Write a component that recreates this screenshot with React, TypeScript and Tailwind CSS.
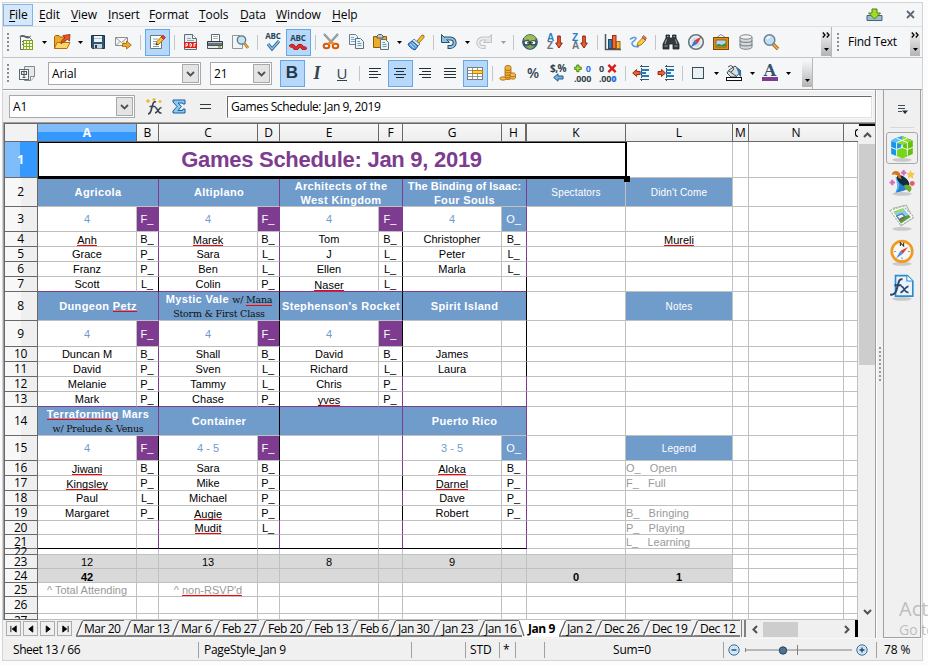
import React from "react";

type Kids = { children?: React.ReactNode };

/* ---------- icon helpers ---------- */
function Svg({ children, s = 18 }: Kids & { s?: number }) {
  return (
    <svg width={s} height={s} viewBox="0 0 18 18" fill="none" className="shrink-0">
      {children}
    </svg>
  );
}

const NewDoc = () => (
  <Svg>
    <path d="M3.500 3.500h8l3 3v10h-11z" fill="#f4f6f7" stroke="#5f6b70" />
    <path d="M2 4c2-3 5-2 7-1s4 1 5-1c0 3-3 4-5 3S4 3 2 4z" fill="#59646a" />
    <path d="M5 8.500h2M5 11.500h1" stroke="#59646a" />
    <rect x="6.500" y="7.500" width="9" height="9" fill="#f5fbe8" stroke="#7d9b1e" />
    <path d="M6.500 10.500h9M6.500 13.500h9M9.500 7.500v9M12.500 7.500v9" stroke="#86b31c" />
  </Svg>
);
const Open = () => (
  <Svg>
    <path d="M1.500 15.500v-12l1-1H6l1 1.500h5V15z" fill="#f0a92c" stroke="#a86408" />
    <path d="M1.500 15.500l2.500-6h13l-3 6z" fill="#ffd768" stroke="#b3720c" />
    <path d="M8 11c0-4 2-5 4-6l-2-2.500 7-1-.5 6.500-2-1.500c-2 1-4 2-6.500 4.500z" fill="#e55b25" stroke="#8d2c10" strokeWidth=".8" />
  </Svg>
);
const Save = () => (
  <Svg>
    <path d="M2.500 2.500h13v13h-12l-1-1z" fill="#315675" stroke="#203246" />
    <path d="M5 3h8v6H5z" fill="#f0f4f7" />
    <path d="M5 11h8v4.500H5z" fill="#ccd5dc" />
    <path d="M6 12h2v3H6z" fill="#253c52" />
    <path d="M5 5.500h8" stroke="#a8c8e0" />
  </Svg>
);
const Mail = () => (
  <Svg>
    <path d="M1.500 4.500h12v8h-12z" fill="#f8f8f5" stroke="#8a8f90" />
    <path d="M2 5l5.500 4.500L13 5M2 12.500l4-4M13 12.500l-4-4" stroke="#949a9a" />
    <path d="M8.500 10.500h4V8l4.800 4-4.800 4v-2.500h-4z" fill="#f5aa24" stroke="#a25f0b" strokeWidth=".8" />
  </Svg>
);
const EditDoc = () => (
  <Svg>
    <path d="M2.500 2.500h11v13h-11z" fill="#fff" stroke="#68787f" />
    <path d="M5 6h5M5 8.500h4M5 11h6M5 13.500h6" stroke="#7ba0b8" />
    <path d="M8 12l1-3.500L14 3l2.500 2.500L11 11z" fill="#f8c62c" stroke="#93600c" strokeWidth=".8" />
    <path d="M13 4l2-2 2.500 2.500-2 2z" fill="#e33c34" stroke="#8c2323" strokeWidth=".6" />
    <path d="M8 12l.5-2 1.500 1.500z" fill="#222" />
  </Svg>
);
const Pdf = () => (
  <Svg>
    <path d="M3.500 1.500h8l4 4v11h-12z" fill="#e7edf0" stroke="#596e78" />
    <path d="M11.500 1.500v4h4" stroke="#596e78" fill="#fff" />
    <path d="M6 5.500h4M6 7.500h7" stroke="#91a8b3" />
    <rect x="3" y="9" width="13" height="6" fill="#d9201b" />
    <path d="M5 14v-3.500h1.500v2H5M9 10.500v3h1l.8-1.500-.8-1.500zM13 14v-3.500h2M13 12.200h1.500" stroke="#fff" strokeWidth=".9" />
  </Svg>
);
const Print = () => (
  <Svg>
    <path d="M5.500 8V1.500h8V8" fill="#fff" stroke="#5e6a70" />
    <path d="M7 3.500h5M7 5.500h5" stroke="#a3adb1" />
    <path d="M1.500 8.500h15v5h-15z" fill="#68747b" stroke="#303a40" />
    <path d="M2 9.500h14" stroke="#b8c0c3" />
    <path d="M1.500 12.500h15v3h-15z" fill="#e8ebec" stroke="#495359" />
    <path d="M12 14h3" stroke="#75ac2b" strokeWidth="1.500" />
  </Svg>
);
const Preview = () => (
  <Svg>
    <path d="M1.500 2.500h7l3 3v10h-10z" fill="#f1f4f5" stroke="#8b989e" />
    <circle cx="10.500" cy="7" r="4.200" fill="#c5e1f2" stroke="#5d7482" strokeWidth="1.300" />
    <path d="M13.500 10.500l3.500 4.500" stroke="#a8711a" strokeWidth="2.800" />
    <path d="M13.500 10.500l3.500 4.500" stroke="#f1bd4b" strokeWidth="1.200" />
  </Svg>
);
const Abc = ({ auto = false }: { auto?: boolean }) => (
  <div className={`flex h-[22px] w-[20px] flex-col items-center ${auto ? "pt-[2px]" : ""}`}>
    <span className="h-[9px] font-['Open_Sans',sans-serif] text-[8px] font-bold leading-[9px] tracking-[-0.1px] text-[#26445a]">ABC</span>
    {auto ? (
      <svg width="18" height="7" viewBox="0 0 18 7" fill="none" className="mt-px">
        <path d="M1 4q2-3 4 0t4 0 4 0 4 0" stroke="#981b1b" strokeWidth="3.600" />
        <path d="M1 4q2-3 4 0t4 0 4 0 4 0" stroke="#f02a25" strokeWidth="2" />
      </svg>
    ) : (
      <svg width="16" height="11" viewBox="0 0 16 11" fill="none">
        <path d="M3 4l4 5 7-8" stroke="#235e91" strokeWidth="3" />
        <path d="M3 4l4 5 7-8" stroke="#81c5ef" strokeWidth="1.400" />
      </svg>
    )}
  </div>
);
const Cut = () => (
  <Svg>
    <path d="M2 1l10 11M16 1L6 12" stroke="#727b80" strokeWidth="2" />
    <path d="M2 1l10 11M16 1L6 12" stroke="#d2d7d9" strokeWidth=".7" />
    <ellipse cx="4.500" cy="13" rx="2.800" ry="2.200" stroke="#d4590b" strokeWidth="2" />
    <ellipse cx="13.500" cy="13" rx="2.800" ry="2.200" stroke="#d4590b" strokeWidth="2" />
    <path d="M6 11l3-2 3 2" stroke="#f38a1c" strokeWidth="2.200" />
  </Svg>
);
const Copy = () => (
  <Svg>
    <path d="M2.500 1.500h6l2 2v8h-8z" fill="#edf4f8" stroke="#71818a" />
    <path d="M4 4.500h3M4 6.500h4M4 8.500h4" stroke="#83a9c0" />
    <path d="M8.500 5.500h5l3 3v7h-8z" fill="#edf4f8" stroke="#5f717b" />
    <path d="M10.500 8.500H13M10.500 10.500h4M10.500 12.500h4" stroke="#6f9bb6" />
  </Svg>
);
const Paste = () => (
  <Svg>
    <path d="M1.500 3.500h13v11h-13z" fill="#ecac2a" stroke="#8c5c09" />
    <path d="M5 3l1.500-1.500h3L11 3v2H5z" fill="#c6cdd0" stroke="#50595d" />
    <path d="M8.500 6.500h5l3 3v7h-8z" fill="#edf4f8" stroke="#5f717b" />
    <path d="M10.500 9.500H13M10.500 11.500h4M10.500 13.500h4" stroke="#6f9bb6" />
  </Svg>
);
const Brush = () => (
  <Svg>
    <path d="M10 8l5-6 2 .5v2L12 10z" fill="#f3bb2e" stroke="#8b5e0f" strokeWidth=".8" />
    <path d="M7 6l6 5-2 2-6-5z" fill="#dce5eb" stroke="#587184" strokeWidth=".8" />
    <path d="M5 8l6 5-3 4C5 16 2 14 1 11z" fill="#5b9fe0" stroke="#235590" />
    <path d="M3 11l4 4M5 9.500l4 4" stroke="#b9ddff" />
  </Svg>
);
const Undo = ({ off = false }: { off?: boolean }) => (
  <Svg>
    <g transform={off ? "matrix(-1 0 0 1 18 0)" : undefined}>
      <path d="M4 5.500h6.500a4.200 4.200 0 010 8.400H7.500" stroke={off ? "#bfc3c5" : "#29516f"} strokeWidth="4" />
      <path d="M1.500 1.500v8h8z" fill={off ? "#e3e5e6" : "#8fc0df"} stroke={off ? "#bfc3c5" : "#29516f"} />
      <path d="M4.500 5.500h6a4.200 4.200 0 010 8.400H8.500" stroke={off ? "#eceeef" : "#91c3e1"} strokeWidth="2" />
    </g>
  </Svg>
);
const Globe = () => (
  <Svg>
    <circle cx="9" cy="9" r="7.300" fill="#417ca4" stroke="#31495b" />
    <path d="M3 5c3-4 9-4 12 0l-2 3H9L7 6 4 8z" fill="#9cbf48" />
    <path d="M5 14l4-2 4 2-4 2z" fill="#86ad38" />
    <rect x="3" y="7.800" width="5.500" height="4" rx="2" fill="#fff" stroke="#343e44" strokeWidth="1.100" />
    <rect x="9.500" y="7.800" width="5.500" height="4" rx="2" fill="#fff" stroke="#343e44" strokeWidth="1.100" />
    <path d="M6 9.800h6" stroke="#343e44" strokeWidth="1.300" />
  </Svg>
);
const Sort = ({ desc = false }: { desc?: boolean }) => (
  <div className="flex h-[18px] w-[16px] items-center">
    <div className="flex w-[8px] flex-col font-['Liberation_Sans',sans-serif] text-[10px] font-bold leading-[8.5px]">
      <span className="text-[#247fc4]">{desc ? "Z" : "A"}</span>
      <span className="text-[#69757c]">{desc ? "A" : "Z"}</span>
    </div>
    <svg width="8" height="14" viewBox="0 0 8 14">
      <path d="M2.700 1h2.600v7h2L4 13 .7 8h2z" fill="#ee5c33" stroke="#8d230c" />
    </svg>
  </div>
);
const Chart = () => (
  <Svg>
    <path d="M1.500 1v15.500H17" stroke="#4c5960" strokeWidth="1.500" />
    <rect x="4.500" y="6.500" width="3.500" height="9" fill="#3a79a9" stroke="#1f4767" />
    <rect x="8.500" y="2.500" width="3.500" height="13" fill="#f16a3b" stroke="#a12d0a" />
    <rect x="12.500" y="8.500" width="3.500" height="7" fill="#f6b83a" stroke="#9a650e" />
  </Svg>
);
const Draw = () => (
  <Svg>
    <path d="M1 6.500c2-2 6-3 6-1s-5 3-4 5.500 4 3 7 2.500" stroke="#5b9be1" strokeWidth="1.500" />
    <path d="M8 13l1-3.500 5-5 3 2.500L12 12z" fill="#f8cf3b" stroke="#8a6212" strokeWidth=".8" />
    <path d="M13 4.500l1.500-2 3 2.500L16 7z" fill="#e36f6c" stroke="#913b35" strokeWidth=".6" />
  </Svg>
);
const Binoc = () => (
  <Svg>
    <path d="M4 2h3.500v3h3V2H14v3l3 6v5h-6v-5H7v5H1v-5l3-6z" fill="#323a3e" stroke="#1d2427" strokeWidth=".8" />
    <path d="M4.500 6.500L3 11M13.500 6.500L15 11M2.500 13h3M12.500 13h3M5 3.500h1.500M11.500 3.500H13" stroke="#9aa5aa" />
  </Svg>
);
const Compass = () => (
  <Svg>
    <circle cx="9" cy="9" r="7.300" fill="#eef3f5" stroke="#68767e" strokeWidth="1.600" />
    <circle cx="9" cy="9" r="4.800" fill="#d4dfe5" />
    <path d="M14.500 3.500l-4 7-3-3z" fill="#e6322b" />
    <path d="M3.500 14.500l4-7 3 3z" fill="#3374d6" />
  </Svg>
);
const Gallery = () => (
  <Svg>
    <path d="M4 5l5-3.500L14 5" stroke="#8b949a" />
    <rect x="1.500" y="4.500" width="15" height="12" fill="#e08e1a" stroke="#804a06" />
    <rect x="4" y="7" width="10" height="7" fill="#acd8f4" stroke="#81560c" strokeWidth=".8" />
    <path d="M4.500 13.500V12q2-2 5 0l4.500-2v3.500z" fill="#4e8a25" />
  </Svg>
);
const Database = () => (
  <Svg>
    <path d="M3 4v10c0 3 12 3 12 0V4z" fill="#d6dadc" stroke="#7d878c" />
    <path d="M3 7.500c0 2.500 12 2.500 12 0M3 11c0 2.500 12 2.500 12 0" stroke="#7d878c" strokeWidth="1.300" />
    <ellipse cx="9" cy="4" rx="6" ry="2.200" fill="#f3f5f5" stroke="#7d878c" />
  </Svg>
);
const Zoom = () => (
  <Svg>
    <path d="M11 11l5 5" stroke="#a0651a" strokeWidth="3.400" />
    <path d="M11 11l5 5" stroke="#f0b64c" strokeWidth="1.600" />
    <circle cx="7.500" cy="7" r="5.300" fill="#c2def4" stroke="#668399" strokeWidth="1.500" />
    <path d="M5 6c.5-1.500 1.500-2 3-2" stroke="#fff" strokeWidth="1.300" />
  </Svg>
);
const Styles = () => (
  <Svg>
    <path d="M6.500 1.500h10v10l-3.500 4H6.500z" fill="#e7eaeb" stroke="#7f898e" />
    <path d="M12.500 15.500v-4h4" stroke="#7f898e" fill="#fff" />
    <rect x="1.500" y="4.500" width="9" height="10" fill="#f7f8f8" stroke="#5f6a70" />
    <path d="M3.500 6.500h5v3h-5zM6 5.500V13M4.500 12.500h3" stroke="#4f5b62" strokeWidth="1.100" />
  </Svg>
);
const Lines = ({ kind }: { kind: "l" | "c" | "r" | "j" }) => {
  const d = {
    l: "M3 4.500h12M3 7.500h9M3 10.500h12M3 13.500h9",
    c: "M3 4.500h12M5 7.500h8M3 10.500h12M5 13.500h8",
    r: "M3 4.500h12M6 7.500h9M3 10.500h12M6 13.500h9",
    j: "M3 4.500h12M3 7.500h12M3 10.500h12M3 13.500h12",
  }[kind];
  return (
    <Svg>
      <path d={d} stroke="#222e38" />
    </Svg>
  );
};
const Merge = () => (
  <Svg>
    <rect x="1.500" y="3.500" width="15" height="12" fill="#fff" stroke="#717d83" />
    <path d="M1.500 6.500h15M1.500 9.500h15M1.500 12.500h15M6.500 3.500v12M11.500 3.500v12" stroke="#8d979b" />
    <rect x="6.500" y="6.500" width="10" height="3" fill="#ffd03c" stroke="#c27d0b" />
  </Svg>
);
const Coins = () => (
  <Svg>
    <path d="M6 3c0-2 6-2 6 0v11c0 2-6 2-6 0z" fill="#f2b13b" stroke="#a5650b" strokeWidth=".8" />
    <path d="M6 5.500c1 1.200 5 1.200 6 0M6 8c1 1.200 5 1.200 6 0M6 10.500c1 1.200 5 1.200 6 0M6 13c1 1.200 5 1.200 6 0" stroke="#b26e0d" />
    <ellipse cx="4" cy="14.500" rx="3.200" ry="1.700" fill="#f3bb50" stroke="#a5650b" strokeWidth=".8" />
    <path d="M11 10c0-1.500 5.500-1.500 5.500 0v4c0 1.500-5.500 1.500-5.500 0z" fill="#f3bb50" stroke="#a5650b" strokeWidth=".8" />
    <path d="M11 12c1 1 4.500 1 5.500 0" stroke="#b26e0d" />
  </Svg>
);
const Currency = () => (
  <div className="flex h-[18px] w-[18px] flex-col items-center">
    <span className="h-[9px] font-['Open_Sans',sans-serif] text-[10px] font-bold leading-[9px] tracking-[-0.5px] text-[#33414a]">$,%</span>
    <svg width="11" height="9" viewBox="0 0 11 9">
      <path d="M.7 4.500L5 .8v2.200h5v3H5v2.200z" fill="#73b4e2" stroke="#24588b" />
    </svg>
  </div>
);
const Decimal = ({ del = false }: { del?: boolean }) => (
  <div className="flex h-[18px] w-[18px] flex-col justify-between font-['Open_Sans',sans-serif] text-[9px] font-bold leading-[9px] text-[#33414a]">
    <div className={`flex h-[9px] items-center justify-between ${del ? "flex-row-reverse" : ""}`}>
      <svg width="10" height="9" viewBox="0 0 11 9">
        {del ? (
          <path d="M1.500.5l8 8M9.500.5l-8 8" stroke="#d91d17" strokeWidth="2.600" />
        ) : (
          <path d="M3 .7h2.500V3H8v2.500H5.500V8H3V5.500H.7V3H3z" fill="#a6df3c" stroke="#467e0b" />
        )}
      </svg>
      <span className={del ? "" : "pr-px text-[#2b6fe0]"}>0</span>
    </div>
    <span className="h-[8px] tracking-[-0.2px]">
      .0{del ? <>0<b className="text-[#2b6fe0]">0</b></> : "00"}
    </span>
  </div>
);
const Indent = ({ inc = false }: { inc?: boolean }) => (
  <Svg>
    <path d="M8 2.500h9M8 15.500h9" stroke="#3f5666" />
    <path d="M9 6h8M9 9h5M9 12h8" stroke="#1d7dbe" strokeWidth="2" />
    <path d="M9.500 1v16" stroke="#31434e" strokeDasharray="1 2" />
    <path d={inc ? "M8.500 9L4.500 5.500v2H1v3h3.500v2z" : "M.7 9l4-3.500v2h3.500v3H4.700v2z"} fill="#ed5d36" stroke="#8b230c" strokeWidth=".9" />
  </Svg>
);
const Bucket = () => (
  <Svg>
    <path d="M4 6l6-4 6 5-5 6H6L2 9z" fill="#d9dfe2" stroke="#3c4b54" />
    <path d="M3 3q3-3 5 0t-2 5M4 7l7 5" stroke="#3c4b54" />
    <path d="M11 4c4 0 6 3 5 9-3-1-2-5-5-9z" fill="#3177ac" />
    <rect x="1.500" y="13.500" width="15" height="3" fill="#fff" stroke="#111" />
  </Svg>
);
const FontColor = () => (
  <div className="flex h-[18px] w-[16px] flex-col items-center">
    <span className="h-[13px] font-['DejaVu_Serif',serif] text-[16px] font-bold leading-[13px] text-[#35516c]">A</span>
    <i className="h-[4px] w-full bg-[#7d3c8f]" />
  </div>
);

/* ---------- toolbar pieces ---------- */
const Slot = ({ children, on = false }: Kids & { on?: boolean }) => (
  <div className={`flex h-[27px] w-[25px] shrink-0 items-center justify-center pr-px pb-px ${on ? "border border-[#66a7e8] bg-[#b8d8f9]" : ""}`}>{children}</div>
);
const Sep = ({ w = "w-[8px]" }: { w?: string }) => (
  <div className={`flex shrink-0 justify-center ${w}`}>
    <i className="h-[15px] w-px bg-[#c3c5c7]" />
  </div>
);
const Arrow = ({ w = "w-[11px]", off = false }: { w?: string; off?: boolean }) => (
  <div className={`flex shrink-0 justify-center ${w}`}>
    <svg width="5" height="3" viewBox="0 0 5 3">
      <path d="M0 0h5L2.500 3z" fill={off ? "#9a9c9e" : "#000"} />
    </svg>
  </div>
);
const Grip = () => (
  <div className="flex w-[10px] shrink-0 pl-[3px]">
    <i className="h-[19px] w-[2px] bg-[repeating-linear-gradient(#8b8d8f_0_2px,transparent_2px_4px)]" />
  </div>
);
const Overflow = ({ more = true }: { more?: boolean }) => (
  <div className={`flex w-[10px] shrink-0 flex-col items-center justify-between bg-[linear-gradient(#f4f5f7,#b4b4b4)] ${more ? "h-[26px] pt-[2px] pb-[5px]" : "h-[26px] pb-[5px]"}`}>
    {more ? (
      <svg width="8" height="6" viewBox="0 0 8 6" fill="none">
        <path d="M.8.5L3 3 .8 5.500M4.800.5L7 3 4.800 5.500" stroke="#000" strokeWidth="1.300" />
      </svg>
    ) : (
      <i />
    )}
    <Arrow />
  </div>
);
const DropBtn = () => (
  <span className="flex h-full w-[17px] items-center justify-center border border-[#a8a8a8] bg-[#e4e4e4]">
    <svg width="9" height="6" viewBox="0 0 9 6" fill="none">
      <path d="M1 1l3.500 3.500L8 1" stroke="#505050" strokeWidth="1.800" />
    </svg>
  </span>
);
const Combo = ({ text, w }: { text: string; w: string }) => (
  <div className={`flex h-[23px] shrink-0 items-center border border-[#a6a8ab] bg-white p-[1px] pl-[3px] ${w}`}>
    <span className="flex-1 text-[12px] tracking-[-0.2px]">{text}</span>
    <DropBtn />
  </div>
);

/* ---------- sheet ---------- */
const HEADS = ["A", "B", "C", "D", "E", "F", "G", "H", "K", "L", "M", "N", ""];

/* Right border of columns B, D, F, H: p = purple, k = black, g = grid */
const EDGES: Record<number, string> = {
  2: "pppp", 3: "pppp", 4: "ppkp", 5: "ppkp", 6: "ppkp", 7: "kkkk", 8: "pkkk", 9: "pkkk", 10: "pkkk", 11: "pkkk",
  12: "pkpp", 13: "kkpp", 14: "pkpp", 15: "kkpp", 16: "kkpp", 17: "kkkp", 18: "kkpp", 19: "kkkp", 20: "pppp", 21: "pppp",
};
const EDGE: Record<string, string> = { p: "border-r-[#7d3c8f]", k: "border-r-black", g: "border-r-[#c0c0c0]" };

/* "~" in front of a value marks a spelling mistake */
const DATA: Record<number, string[]> = {
  3: ["4", "F_", "4", "F_", "4", "F_", "4", "O_"],
  4: ["~Anh", "B_", "~Marek", "B_", "Tom", "B_", "Christopher", "B_", "", "~Mureli"],
  5: ["Grace", "P_", "Sara", "L_", "J", "L_", "Peter", "L_"],
  6: ["Franz", "P_", "Ben", "L_", "Ellen", "L_", "Marla", "L_"],
  7: ["Scott", "L_", "Colin", "P_", "~Naser", "L_"],
  9: ["4", "F_", "4", "F_", "4", "F_"],
  10: ["Duncan M", "B_", "Shall", "B_", "David", "B_", "James"],
  11: ["David", "P_", "Sven", "L_", "Richard", "L_", "Laura"],
  12: ["Melanie", "P_", "Tammy", "L_", "Chris", "P_"],
  13: ["Mark", "P_", "Chase", "P_", "~yves", "P_"],
  15: ["4", "F_", "4 - 5", "F_", "", "", "3 - 5", "O_", "", "Legend"],
  16: ["~Jiwani", "B_", "Sara", "B_", "", "", "~Aloka", "B_", "", "O_   Open"],
  17: ["~Kingsley", "P_", "Mike", "P_", "", "", "~Darnel", "P_", "", "F_   Full"],
  18: ["Paul", "L_", "Michael", "P_", "", "", "Dave", "P_"],
  19: ["Margaret", "P_", "~Augie", "P_", "", "", "Robert", "P_", "", "B_   Bringing"],
  20: ["", "", "~Mudit", "L_", "", "", "", "", "", "P_   Playing"],
  21: ["", "", "", "", "", "", "", "", "", "L_   Learning"],
  23: ["12", "", "13", "", "8", "", "9"],
  24: ["42", "", "", "", "", "", "", "", "0", "1"],
};

const Bad = ({ children }: Kids) => (
  <span className="inline-block border-b border-[#ff0000] leading-[10px]">{children}</span>
);
const Serif = ({ children }: Kids) => (
  <span className="font-['DejaVu_Serif',serif] text-[9.5px] font-normal leading-[10px] tracking-[-0.22px] text-[#111]">{children}</span>
);
const TwoLine = ({ children }: Kids) => <div className="pt-[2px]">{children}</div>;

const GAMES: Record<number, React.ReactNode[]> = {
  2: [
    "Agricola",
    "Altiplano",
    <TwoLine>Architects of the<br />West Kingdom</TwoLine>,
    <TwoLine><span className="tracking-[0.1px]">The Binding of Isaac:</span><br />Four Souls</TwoLine>,
  ],
  8: [
    <>Dungeon <Bad>Petz</Bad></>,
    <div>
      <div className="h-[14px]">Mystic Vale <Serif>w/ <Bad>Mana</Bad></Serif></div>
      <div className="h-[14px]"><Serif>Storm &amp; First Class</Serif></div>
    </div>,
    "Stephenson's Rocket",
    "Spirit Island",
  ],
  14: [
    <div>
      <div className="h-[14px]"><Bad>Terraforming</Bad> Mars</div>
      <div className="h-[14px]"><Serif>w/ Prelude &amp; Venus</Serif></div>
    </div>,
    "Container",
    "",
    "Puerto Rico",
  ],
};
const SIDE: Record<number, string[]> = { 2: ["Spectators", "Didn't Come"], 8: ["", "Notes"], 14: ["", ""] };

function bottom(row: number, col: number) {
  if (col < 8 && (row === 7 || row === 13)) return "border-b-[#7d3c8f]";
  if (col < 8 && row === 21) return "border-b-black";
  return "border-b-[#c0c0c0]";
}
function right(row: number, col: number) {
  if (col % 2 === 1 && col < 8) return EDGE[(EDGES[row] ?? "gggg")[(col - 1) / 2]];
  return "border-r-[#c0c0c0]";
}
const CELL = "flex min-w-0 min-h-0 items-center justify-center whitespace-pre border-r border-b text-center leading-[14px]";
const PLAIN_HEAD = "bg-[#709ccc] pt-[2px] text-[10px] text-white tracking-[0.15px]";

function Cell({ row, col }: { row: number; col: number }) {
  const raw = DATA[row]?.[col] ?? "";
  const bad = raw.startsWith("~");
  const text = bad ? raw.slice(1) : raw;
  let tone = "text-black";
  const big = row === 3 || row === 9 || row === 15;
  if (big && text === "F_") tone = "bg-[#7d3c8f] text-white";
  else if (big && text === "O_") tone = "bg-[#709ccc] text-white";
  else if (big && col === 9 && text) tone = PLAIN_HEAD;
  else if (big) tone = "text-[#709ccc]";
  else if (row === 23 && col < 10) tone = "bg-[#d9d9d9] text-black pt-px";
  else if (row === 24 && col < 10) tone = "bg-[#d9d9d9] font-bold text-black pt-[2px]";
  else if (col === 9 && row > 15) tone = "justify-start! text-[#999]";
  if (bad) tone += row === 20 ? " pt-[1px]" : " pt-[3px]";
  else if (col % 2 === 1 && col < 8) tone += " pr-px";
  return (
    <div className={`${CELL} ${right(row, col)} ${bottom(row, col)} ${tone}`}>
      {bad ? <Bad>{text}</Bad> : text}
    </div>
  );
}

function Row({ row }: { row: number }) {
  const head = (
    <div
      className={`flex min-h-0 justify-center border-r border-b border-[#696969] pr-[1px] font-['Open_Sans',sans-serif] text-[12px] tracking-[-0.4px] ${
        row === 27 ? "items-start overflow-hidden leading-[13px]" : "items-center leading-[14px]"
      } ${row === 1 ? "bg-[linear-gradient(90deg,#7fbcfb_0_48%,#3399ff_48%)] font-bold text-white" : "bg-[linear-gradient(90deg,#f8f8f8_0_48%,#efefef_52%)]"}`}
    >
      {row}
    </div>
  );
  const rest = (from: number) =>
    HEADS.slice(from).map((_, i) => <Cell key={i} row={row} col={from + i} />);

  if (row === 1)
    return (
      <>
        {head}
        <div className="relative col-span-9 flex items-center justify-center pr-px font-['Liberation_Sans',sans-serif] text-[22px] font-bold tracking-[-0.28px] text-[#7d3c8f]">
          Games Schedule: Jan 9, 2019
          <i className="absolute top-0 -right-px -bottom-px left-0 border-t border-r-2 border-b-3 border-l border-black" />
          <i className="absolute -right-[4px] -bottom-[4px] h-[6px] w-[6px] bg-black" />
        </div>
        {rest(9)}
      </>
    );
  if (GAMES[row])
    return (
      <>
        {head}
        {GAMES[row].map((g, i) => (
          <div
            key={i}
            className={`${CELL} col-span-2 ${right(row, i * 2 + 1)} border-b-[#c0c0c0] bg-[#709ccc] font-bold tracking-[0.35px] text-white`}
          >
            <div className="leading-[14px]">{g}</div>
          </div>
        ))}
        {SIDE[row].map((s, i) => (
          <div key={i} className={`${CELL} border-[#c0c0c0] ${s ? PLAIN_HEAD : ""}`}>{s}</div>
        ))}
        {rest(10)}
      </>
    );
  if (row === 25)
    return (
      <>
        {head}
        <div className={`${CELL} border-[#c0c0c0] pt-px text-[#999]`}>^ Total Attending</div>
        <Cell row={row} col={1} />
        <div className={`${CELL} border-[#c0c0c0] pt-px text-[#999]`}>^ <Bad>non-RSVP'd</Bad></div>
        {rest(3)}
      </>
    );
  return (
    <>
      {head}
      {rest(0)}
    </>
  );
}

function Sheet() {
  return (
    <div className="grid h-[496px] w-[853px] shrink-0 overflow-hidden bg-white font-['Liberation_Sans',sans-serif] text-[11px] grid-cols-[33px_99px_22px_99px_22px_99px_24px_99px_25px_99px_107px_16px_95px_14px] grid-rows-[18px_36px_29px_25px_15px_15px_15px_15px_29px_26px_15px_15px_15px_15px_29px_25px_15px_15px_15px_15px_14px_14px_6px_14px_14px_14px_17px_6px]">
      <div className="border-r border-b border-[#696969] bg-[#f2f2f2]" />
      {HEADS.map((h, i) => (
        <div
          key={i}
          className={`flex items-center justify-center border-b border-[#696969] font-['Open_Sans',sans-serif] text-[12px] leading-none ${
            i === 7 ? "border-r-2" : i === 12 ? "" : "border-r"
          } ${i === 0 ? "bg-[linear-gradient(#7fbcfb_0_48%,#3399ff_48%)] font-bold text-white" : "bg-[linear-gradient(#f8f8f8,#ededed)]"}`}
        >
          {h}
          {i === 12 && <span className="ml-[10px] h-[8px] w-[3px] rounded-l-full border-y border-l border-black" />}
        </div>
      ))}
      {Array.from({ length: 27 }, (_, i) => (
        <Row key={i} row={i + 1} />
      ))}
    </div>
  );
}

/* ---------- sheet tabs ---------- */
const TABS: [string, string][] = [
  ["Mar 20", "w-[48px]"], ["Mar 13", "w-[48px]"], ["Mar 6", "w-[41px]"], ["Feb 27", "w-[46px]"], ["Feb 20", "w-[46px]"],
  ["Feb 13", "w-[46px]"], ["Feb 6", "w-[38px]"], ["Jan 30", "w-[44px]"], ["Jan 23", "w-[45px]"], ["Jan 16", "w-[44px]"],
  ["Jan 9", "w-[37px]"], ["Jan 2", "w-[36px]"], ["Dec 26", "w-[48px]"], ["Dec 19", "w-[48px]"], ["Dec 12", "w-[49px]"],
];
const NAV = ["M1 1v7M7 1v7L2.500 4.500z", "M6.500 1v7L2 4.500z", "M2.500 1v7L7 4.500z", "M8 1v7M2 1v7l4.500-3.500z"];

function TabBar() {
  return (
    <div className="flex h-[18px] shrink-0 bg-[#f0f0f0]">
      <div className="flex w-[73px] shrink-0 gap-[2px] pt-[1px] pl-[3px]">
        {NAV.map((d) => (
          <span key={d} className="flex h-[15px] w-[15px] items-center justify-center border border-[#adadad] bg-[#f0f0f0]">
            <svg width="8" height="8" viewBox="0 0 9 9">
              <path d={d} fill="#000" stroke="#000" strokeWidth="1" />
            </svg>
          </span>
        ))}
      </div>
      <div className="flex h-[17px] w-[665px] shrink-0 font-['Open_Sans',sans-serif] text-[12px] leading-[16px]">
        {TABS.map(([t, w], i) => (
          <div
            key={t}
            className={`flex shrink-0 ${w} ${t === "Jan 9" ? "bg-white pt-px font-bold tracking-[-0.45px]" : "border-t border-b-2 border-t-[#696969] border-b-[#808080] bg-[#f0f0f0] tracking-[-0.45px]"}`}
          >
            {t === "Jan 9" ? (
              <svg width="7" height="17" viewBox="0 0 7 17" className="-mt-px -ml-[3px] shrink-0">
                <path d="M-1 0l6.500 17H8V0z" fill="#fff" />
                <path d="M0 1l5 15" stroke="#696969" strokeWidth="1.300" />
              </svg>
            ) : (
              <svg width="8" height="16" viewBox="0 0 8 16" className="-mt-px shrink-0">
                <path d="M0 16V0h7z" fill={t === "Jan 2" ? "#fff" : "#f0f0f0"} />
                <path d="M.5 15.500L6.500 1" stroke="#555" strokeWidth="1.200" />
                <path d="M2.500 15.500L7.500 2.500" stroke="#fff" />
              </svg>
            )}
            <span className={`whitespace-nowrap ${t === "Jan 9" ? "ml-[2px]" : t === "Jan 16" ? "-ml-px" : i === 0 || t === "Jan 2" ? "" : "ml-px"}`}>{t}</span>
          </div>
        ))}
      </div>
      <i className="mr-[6px] h-[17px] w-[5px] shrink-0 border-r-2 border-l border-[#808080]" />
      <div className="flex h-[16px] w-[98px] items-center justify-between self-center">
        <svg width="6" height="9" viewBox="0 0 6 9" fill="none"><path d="M5 1L1.500 4.500 5 8" stroke="#505050" strokeWidth="2" /></svg>
        <i className="mr-[46px] ml-[5px] h-[15px] flex-1 bg-[#cdcdcd]" />
        <svg width="6" height="9" viewBox="0 0 6 9" fill="none"><path d="M1 1l3.500 3.500L1 8" stroke="#505050" strokeWidth="2" /></svg>
      </div>
      <i className="mr-[17px] ml-auto h-[17px] w-[3px] bg-black" />
    </div>
  );
}

/* ---------- sidebar icons ---------- */
const Shadow = () => <ellipse cx="12" cy="23" rx="9" ry="1.800" fill="#000" opacity=".16" />;
const SideSvg = ({ children }: Kids) => (
  <svg width="26" height="27" viewBox="0 0 24 25" fill="none">
    <Shadow />
    {children}
  </svg>
);
const Cube = () => (
  <SideSvg>
    <path d="M2 5l5-2.500L12 1l10 4-10 4z" fill="#2fa6ee" />
    <path d="M2 5.500l9.500 3v5l-4.500 1v5l-5-2z" fill="#1795e6" />
    <path d="M12.500 9l9.500-4v12.500l-9.500 4z" fill="#64c00d" />
    <path d="M12 1l10 4-10 4-5-2 5-2z" fill="#8fdc2b" />
    <path d="M2 5l5-2.500L12 5 7 7z" fill="#5fc0f8" />
    <path d="M7 14l5-2 5 2v5.500l-5 2-5-2z" fill="#76d617" />
    <path d="M7 3l10 4v12M17 3L7 7v12M2 11.500l5 2 5-2 5 2 5-2M12 9v3" stroke="#f2fff0" strokeWidth=".9" />
  </SideSvg>
);
const Gifts = () => (
  <SideSvg>
    <path d="M6 7c3 4 3 10 0 15 6-1 10-2 13-6z" fill="#2680d0" />
    <path d="M6 8c2 6 2 9 0 13 4-2 5-8 1-13z" fill="#63b7ee" />
    <ellipse cx="13" cy="11" rx="3.600" ry="7" transform="rotate(-50 13 11)" fill="#102b45" />
    <path d="M2.500 5.500c0-5 7.500-5 8 0l1 4-3-1.500c0-2.500-3-3.500-6-2.500z" fill="#d9741e" />
    <path d="M14 15c6-2 9 3 5 6.500-2-2-5-3-5-6.500z" fill="#73a931" />
    <path d="M20 1l1 2.500 3 .5-2 2 .5 3-2.500-1.500L17.500 9l.5-3-2-2 3-.5z" fill="#f7c646" />
    <path d="M13.500 1v5M11 3.500h5M3 10v5M.5 12.500h5" stroke="#d967c2" strokeWidth="2" />
    <circle cx="21.500" cy="13.500" r="2.300" fill="#e95c62" />
  </SideSvg>
);
const Photos = () => (
  <SideSvg>
    <path d="M4 4l12-3 6 12-11 7z" fill="#e6efe3" stroke="#a9b7a9" />
    <path d="M1 6l12-4 10 10-12 8z" fill="#fff" stroke="#a7adb0" strokeDasharray="2 1" />
    <path d="M4 7l9-3 7 8-9 6z" fill="#8cc7ef" />
    <path d="M4 7l9-3 1.500 1.500L5 9z" fill="#9fdc55" />
    <path d="M11 18l-2-3 9-5 2 2z" fill="#5fa22a" />
    <path d="M7 11l5-2 3 3-5 3z" fill="#e8f4fb" stroke="#3775a9" />
    <path d="M10 14l4-2" stroke="#9c5a22" strokeWidth="1.500" />
  </SideSvg>
);
const Navigator = () => (
  <SideSvg>
    <circle cx="12" cy="11.500" r="9.500" fill="#f6f7f7" stroke="#ee9b1e" strokeWidth="2.500" />
    <path d="M10.500 6.500V3.500l3 3v-3" stroke="#333" />
    <path d="M17.500 7.500l-4.500 6-2.500-2.500z" fill="#dd3c31" />
    <path d="M6.500 18l4-7 2.500 2.500z" fill="#4a8fd8" />
    <path d="M12 17v2M4.500 11.500h2M17.500 11.500h2" stroke="#999" />
  </SideSvg>
);
const FxDoc = () => (
  <SideSvg>
    <path d="M6 1.500h11l5 5v14H6z" fill="#eaf4fc" stroke="#2a8cd0" strokeWidth="1.500" />
    <path d="M16.500 1.500v5h5.500" stroke="#2a8cd0" fill="#fff" />
    <path d="M12.500 5c-3-1-3.500 2-4.500 6s-2 9-7 8M5 10.500h6.500" stroke="#2b466d" strokeWidth="1.800" />
    <path d="M11 11.500c3-1 3 6.500 7 5.500M18 11.500c-3 0-5 6-7.500 5.500" stroke="#2b466d" strokeWidth="1.500" />
  </SideSvg>
);

function Sidebar() {
  return (
    <div className="flex w-[38px] shrink-0 flex-col items-center border-x border-b border-[#a0a0a0] bg-[#f0f0f0]">
      <svg width="12" height="10" viewBox="0 0 12 10" fill="none" className="mt-[14px] ml-[3px]">
        <path d="M0 1.500h7M0 4.500h7M0 7.500h4" stroke="#40505b" />
        <path d="M4 6.500h6L7 10z" fill="#1d2a33" />
      </svg>
      <i className="mt-[13px] h-px w-[24px] bg-[#d8d8d8]" />
      <div className="mt-[4px] flex h-[32px] w-[32px] items-center justify-center rounded-[3px] border border-[#a8a8a8]"><Cube /></div>
      <div className="mt-[5px] flex flex-col gap-[8px]">
        <Gifts />
        <Photos />
        <Navigator />
        <FxDoc />
      </div>
    </div>
  );
}

const VBar = ({ w }: { w: string }) => <div className={`h-[16px] shrink-0 border-r border-[#a0a0a0] ${w}`} />;
const Knob = ({ plus = false }: { plus?: boolean }) => (
  <svg width="12" height="12" viewBox="0 0 12 12" className="shrink-0">
    <circle cx="6" cy="6" r="5.200" fill="#cfe6f8" stroke="#3c6d99" />
    <path d={plus ? "M3.500 6h5M6 3.500v5" : "M3.500 6h5"} stroke="#23466a" strokeWidth="1.400" />
  </svg>
);

const MENUS: [string, string][] = [
  ["File", "w-[30px]"], ["Edit", "w-[32px]"], ["View", "w-[37px]"], ["Insert", "w-[41px]"], ["Format", "w-[50px]"],
  ["Tools", "w-[41px]"], ["Data", "w-[36px]"], ["Window", "w-[56px]"], ["Help", "w-[40px]"],
];

export default function App() {
  return (
    <div className="relative h-[665px] w-[928px] overflow-hidden bg-[#fcfcfc] pt-[2px] pl-[2px] font-['Open_Sans',sans-serif] text-[12px] leading-[16px] text-black">
      <div className="flex h-[659px] w-[921px] flex-col border border-[#d2d3d4] bg-[#f0f0f0]">
        {/* menu bar */}
        <div className="flex h-[24px] shrink-0 items-center border-b border-[#dfe0e2] bg-[#f5f6f8]">
          {MENUS.map(([m, w], i) => (
            <div key={m} className={`shrink-0 ${w}`}>
              <span
                className={`inline-block h-[22px] pt-[2px] pl-[5px] tracking-[-0.1px] ${i === 0 ? "w-[30px] border border-[#7fb5ea] bg-[#d5e7f9]" : "border border-transparent"}`}
              >
                <u className="underline-offset-2">{m[0]}</u>
                {m.slice(1)}
              </span>
            </div>
          ))}
          <svg width="17" height="14" viewBox="0 0 17 14" className="ml-auto">
            <path d="M1 7.500h15v5H1z" fill="#9cbbcd" stroke="#41647a" />
            <path d="M6 1h5v4h3.500l-6 6-6-6H6z" fill="#a4d92c" stroke="#4a820d" />
          </svg>
          <svg width="9" height="9" viewBox="0 0 9 9" fill="none" className="mr-[7px] ml-[23px]">
            <path d="M1 1l7 7M8 1L1 8" stroke="#5d6a75" strokeWidth="1.800" />
          </svg>
        </div>

        {/* standard toolbar */}
        <div className="flex h-[31px] shrink-0 border-b border-[#c2c3c4] bg-[#f5f6f8] pl-px">
          <div className="flex w-[828px] items-center border-r border-[#b8b8b8] pt-px">
            <Grip />
            <Slot><NewDoc /></Slot><Arrow />
            <Slot><Open /></Slot><Arrow />
            <Slot><Save /></Slot>
            <Slot><Mail /></Slot><Sep w="w-[9px]" />
            <Slot on><EditDoc /></Slot><Sep />
            <Slot><Pdf /></Slot>
            <Slot><Print /></Slot>
            <Slot><Preview /></Slot><Sep />
            <Slot><Abc /></Slot>
            <Slot on><Abc auto /></Slot><Sep />
            <Slot><Cut /></Slot>
            <Slot><Copy /></Slot>
            <Slot><Paste /></Slot><Arrow w="w-[10px]" />
            <Slot><Brush /></Slot><Sep />
            <Slot><Undo /></Slot><Arrow w="w-[10px]" />
            <Slot><Undo off /></Slot><Arrow w="w-[12px]" off /><Sep w="w-[9px]" />
            <Slot><Globe /></Slot>
            <Slot><Sort /></Slot>
            <Slot><Sort desc /></Slot><Sep />
            <Slot><Chart /></Slot>
            <Slot><Draw /></Slot><Sep />
            <Slot><Binoc /></Slot>
            <Slot><Compass /></Slot>
            <Slot><Gallery /></Slot>
            <Slot><Database /></Slot>
            <Slot><Zoom /></Slot>
            <div className="flex-1" />
            <Overflow />
          </div>
          <div className="flex flex-1 items-center pt-px pl-[2px]">
            <Grip />
            <span className="mb-px ml-[4px] whitespace-nowrap tracking-[-0.25px]">Find Text</span>
            <div className="flex-1" />
            <Overflow />
            <i className="w-[2px]" />
          </div>
        </div>

        {/* formatting toolbar */}
        <div className="flex h-[32px] shrink-0 border-b border-[#a0a0a0] bg-[#f5f6f8] pl-px">
          <div className="flex w-[809px] items-center border-r border-[#b8b8b8]">
            <Grip />
            <div className="mr-[8px] flex w-[26px] justify-center"><Styles /></div>
            <Combo text="Arial" w="w-[153px]" />
            <i className="w-[9px]" />
            <Combo text="21" w="w-[62px]" />
            <i className="w-[8px]" />
            <Slot on><span className="font-['Liberation_Sans',sans-serif] text-[17px] font-bold text-[#24384a]">B</span></Slot>
            <Slot><span className="font-['Liberation_Serif',serif] text-[18px] font-bold italic text-[#33434f]">I</span></Slot>
            <Slot><span className="border-b border-[#33434f] text-[15px] leading-[14px] text-[#33434f]">U</span></Slot>
            <Sep />
            <Slot><Lines kind="l" /></Slot>
            <Slot on><Lines kind="c" /></Slot>
            <Slot><Lines kind="r" /></Slot>
            <Slot><Lines kind="j" /></Slot>
            <Slot on><Merge /></Slot>
            <Sep />
            <Slot><Coins /></Slot>
            <Slot><span className="text-[14px] font-semibold text-[#33434f]">%</span></Slot>
            <Slot><Currency /></Slot>
            <Slot><Decimal /></Slot>
            <Slot><Decimal del /></Slot>
            <Sep />
            <Slot><Indent /></Slot>
            <Slot><Indent inc /></Slot>
            <Sep w="w-[7px]" />
            <Slot><span className="h-[12px] w-[12px] border border-[#3b4b55] bg-[#e9f0f4]" /></Slot>
            <Arrow />
            <Slot><Bucket /></Slot>
            <Arrow />
            <Slot><FontColor /></Slot>
            <Arrow />
            <div className="flex-1" />
            <Overflow more={false} />
          </div>
        </div>

        {/* work area */}
        <div className="flex h-[548px] shrink-0">
          <div className="flex w-[873px] shrink-0 flex-col border-r border-[#a0a0a0]">
            <div className="flex h-[32px] shrink-0 items-center border-t border-white pl-[6px]">
              <div className="flex h-[23px] w-[126px] items-center border border-[#a6a8ab] bg-white p-[1px] pl-[3px]">
                <span className="flex-1 tracking-[-0.2px]">A1</span>
                <DropBtn />
              </div>
              <svg width="18" height="18" viewBox="0 0 18 18" fill="none" className="ml-[11px]">
                <path d="M10 4c-3-1-3 2-4 5s-1 7-4 7M3.500 8.500h6" stroke="#34434e" strokeWidth="1.600" />
                <path d="M9 9.500c3-.5 2 6 6.500 5.500M15.500 9.500c-2.500 0-4 5.500-6.500 5.500" stroke="#34434e" strokeWidth="1.500" />
                <path d="M2 1v4M0 3h4M8 0v3M6.500 1.500h3M14 2v3M12.500 3.500h3" stroke="#efb62b" strokeWidth="1.300" />
              </svg>
              <svg width="14" height="15" viewBox="0 0 14 15" className="ml-[8px]">
                <path d="M1 1h12v4h-2l-.5-1H6l3.500 3.500L6 11.500h4.500L11 10h2v4H1v-2l4-4.500L1 3z" fill="#8cc8f0" stroke="#175f9f" />
              </svg>
              <span className="mr-[16px] ml-[14px] h-[5px] w-[11px] border-y-[1.5px] border-[#2c3a44]" />
              <div className="flex h-[22px] w-[645px] items-center border-t border-l border-[#696969] border-r border-b border-r-[#e3e3e3] border-b-[#e3e3e3] bg-white pl-[3px] shadow-[0_0_0_1px_#f8f8f8]">
                <span className="tracking-[-0.4px]">Games Schedule: Jan 9, 2019</span>
              </div>
            </div>
            <div className="flex h-[498px] shrink-0 border-t border-l border-[#a0a0a0]">
              <div className="flex flex-1 border-t border-l border-[#696969]">
                <Sheet />
                <div className="flex flex-1 flex-col items-center bg-[#f0f0f0] pl-px">
                  <i className="h-[2px] w-full bg-black" />
                  <div className="flex h-[18px] items-center">
                    <svg width="9" height="6" viewBox="0 0 9 6" fill="none"><path d="M1 5l3.500-3.500L8 5" stroke="#505050" strokeWidth="2" /></svg>
                  </div>
                  <i className="h-[221px] w-full bg-[#cdcdcd]" />
                  <svg width="9" height="6" viewBox="0 0 9 6" fill="none" className="mt-auto mb-[5px]"><path d="M1 1l3.500 3.500L8 1" stroke="#505050" strokeWidth="2" /></svg>
                </div>
              </div>
            </div>
            <TabBar />
          </div>
          <div className="flex w-[7px] items-center justify-center border-l border-white">
            <i className="h-[34px] w-[2px] bg-[repeating-linear-gradient(#999_0_2px,transparent_2px_4px)]" />
          </div>
          <Sidebar />
        </div>

        {/* status bar */}
        <div className="flex h-[22px] shrink-0 items-center border-t border-[#f8f8f8] pt-px tracking-[-0.15px]">
          <span className="w-[195px] pl-[10px] tracking-[-0.45px]">Sheet 13 / 66</span>
          <VBar w="w-px" />
          <span className="w-[212px] pl-[5px] tracking-[-0.3px]">PageStyle_Jan 9</span>
          <VBar w="w-px" />
          <VBar w="w-[54px]" />
          <span className="w-[33px] pl-[4px]">STD</span>
          <VBar w="w-px" />
          <span className="w-[15px] pl-[3px]">*</span>
          <VBar w="w-px" />
          <VBar w="w-[29px]" />
          <span className="w-[178px] pr-[4px] text-center">Sum=0</span>
          <VBar w="w-px" />
          <div className="flex w-[152px] items-center pl-[4px]">
            <Knob />
            <svg width="116" height="12" viewBox="0 0 116 12" className="shrink-0">
              <path d="M5.500 4v4M5 6h107M57.500 1v10" stroke="#808080" fill="none" />
              <circle cx="43" cy="6.500" r="3.700" fill="#4f7391" stroke="#24425c" />
            </svg>
            <Knob plus />
          </div>
          <VBar w="w-px" />
          <span className="pl-[7px]">78 %</span>
        </div>
      </div>

      {/* desktop watermark showing over the window's corner */}
      <div className="absolute top-[596px] left-[899px] whitespace-nowrap text-[#909090]/55">
        <div className="text-[20px] leading-[25px]">Activate</div>
        <div className="text-[14px] leading-[18px]">Go to</div>
      </div>
    </div>
  );
}
